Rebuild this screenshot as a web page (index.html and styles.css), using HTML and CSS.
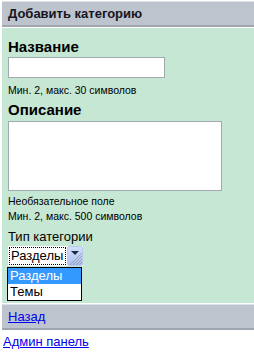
FILE: index.html
```html
<!DOCTYPE html>
<html lang="ru">
<head>
    <meta charset="UTF-8">
    <meta name="viewport" content="width=device-width, initial-scale=1.0">
    <title>Добавить категорию</title>
    <link rel="stylesheet" href="styles.css">
</head>
<body>
<div class="page">
    <div class="bar bar-top">Добавить категорию</div>
    <form class="panel" id="categoryForm">
        <label class="field-title" for="title">Название</label>
        <input type="text" id="title" name="title" class="text-input">
        <div class="hint hint-first">Мин. 2, макс. 30 символов</div>

        <label class="field-title" for="description">Описание</label>
        <textarea id="description" name="description" class="text-area"></textarea>
        <div class="hint hint-opt">Необязательное поле</div>
        <div class="hint hint-last">Мин. 2, макс. 500 символов</div>

        <div class="type-label">Тип категории</div>
        <div class="select-wrap">
            <div class="select-box">
                <span class="select-value">Разделы</span>
                <span class="select-btn">
                    <svg width="16" height="20" viewBox="0 0 16 20">
                        <defs>
                            <linearGradient id="btnGrad" x1="0" y1="0" x2="0" y2="1">
                                <stop offset="0" stop-color="#d4e1fb"/>
                                <stop offset="1" stop-color="#a9bff0"/>
                            </linearGradient>
                        </defs>
                        <rect x="0.5" y="0.5" width="15" height="19" rx="1.5" fill="url(#btnGrad)" stroke="#b7c9ee"/>
                        <path d="M4 5h8l-4 4z" fill="#1d2a4d"/>
                        <path d="M6 19l9-9M9 19l6-6M12 19l3-3M3 19l12-12" stroke="#9aa3b3" stroke-width="1"/>
                    </svg>
                </span>
            </div>
            <ul class="select-list">
                <li class="option active">Разделы</li>
                <li class="option">Темы</li>
            </ul>
        </div>
    </form>
    <div class="bar bar-bottom"><a href="#">Назад</a></div>
</div>
<a class="admin-link" href="#">Админ панель</a>
</body>
</html>
```

FILE: styles.css
```css
body {
    margin: 0;
    padding: 0;
    background-color: #fff;
    font-family: "Liberation Sans", Arial, sans-serif;
    font-size: 13px;
    color: #000;
}

.page {
    margin-left: 2px;
}

a {
    color: #0000ee;
}

.bar {
    background-color: #bec4cd;
    border-top: 1px solid #dde0e5;
    border-bottom: 2px solid #a0a6b0;
    height: 23px;
    line-height: 23px;
    padding-left: 6px;
}

.bar-top {
    margin-top: 1px;
    margin-bottom: 1px;
    font-weight: bold;
    color: #15151f;
}

.bar-bottom {
    margin-top: 1px;
}

.panel {
    background-color: #c6e7d3;
    padding: 10px 6px 37px;
}

.field-title {
    display: block;
    font-size: 15px;
    font-weight: bold;
    line-height: 18px;
}

.text-input {
    display: block;
    box-sizing: border-box;
    width: 157px;
    height: 21px;
    margin: 1px 0 0;
    border: 1px solid #a3a9b0;
    background: #fff;
}

.text-area {
    display: block;
    box-sizing: border-box;
    width: 214px;
    height: 70px;
    margin: 2px 0 0;
    border: 1px solid #a3a9b0;
    background: #fff;
    resize: none;
}

.hint {
    font-size: 10.5px;
    line-height: 12px;
}

.hint-first {
    margin-top: 6px;
    margin-bottom: 5px;
}

.hint-opt {
    margin-top: 4px;
}

.hint-last {
    margin-top: 3px;
}

.type-label {
    margin-top: 7px;
    line-height: 16px;
}

.select-wrap {
    position: relative;
    margin-top: 1px;
    width: 75px;
}

.select-box {
    display: flex;
    height: 20px;
    background: #fff;
}

.select-value {
    flex: 1;
    margin: 1px;
    padding-left: 1px;
    border: 1px dotted #000;
    line-height: 16px;
}

.select-btn {
    display: flex;
}

.select-list {
    position: absolute;
    top: 21px;
    left: -1px;
    width: 73px;
    margin: 0;
    padding: 0;
    list-style: none;
    background: #fff;
    border: 1px solid #000;
}

.option {
    height: 16px;
    line-height: 16px;
    padding-left: 2px;
}

.option.active {
    background-color: #3399ff;
    color: #fff;
}

.admin-link {
    display: inline-block;
    margin: 4px 0 0 3px;
    line-height: 16px;
}
```
